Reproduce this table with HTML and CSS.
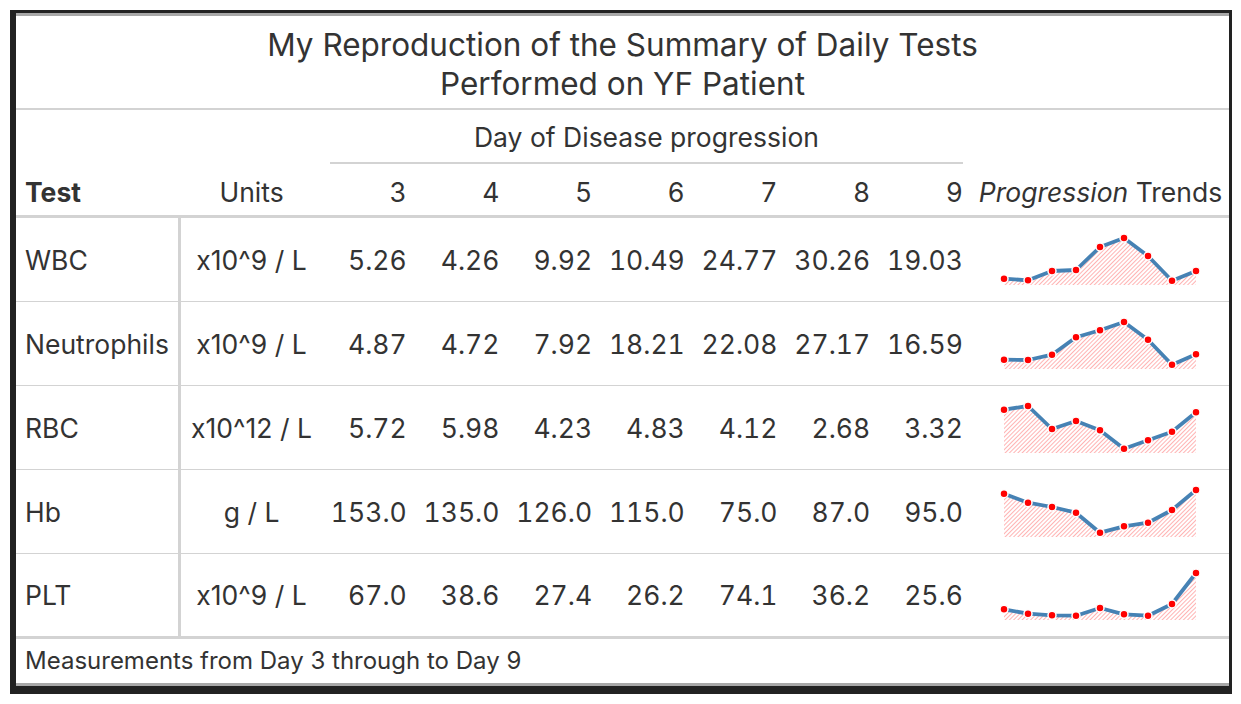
FILE: index.html
```html
<!DOCTYPE html>
<html>
<head>
<meta charset="utf-8">
<link rel="stylesheet" href="styles.css">
</head>
<body>
<svg class="defs" width="0" height="0">
  <defs>
    <pattern id="hatch" patternUnits="userSpaceOnUse" width="3" height="3" patternTransform="rotate(45)">
      <line x1="0" y1="0" x2="0" y2="3" stroke="#ff8a8a" stroke-width="1.3"/>
    </pattern>
  </defs>
</svg>
<div class="frame">
  <div class="gt">
    <div class="heading">
      <div class="title">My Reproduction of the Summary of Daily Tests</div>
      <div class="title">Performed on YF Patient</div>
    </div>
    <table class="tbl">
      <colgroup>
        <col class="c-test"><col class="c-units">
        <col class="c-day"><col class="c-day"><col class="c-day"><col class="c-day"><col class="c-day"><col class="c-day"><col class="c-day">
        <col class="c-trend">
      </colgroup>
      <thead>
        <tr class="spanrow">
          <th rowspan="2" class="lab lab-test">Test</th>
          <th rowspan="2" class="lab lab-center">Units</th>
          <th colspan="7" class="spanner"><div class="spanner-label">Day of Disease progression</div></th>
          <th rowspan="2" class="lab lab-center"><em>Progression</em> Trends</th>
        </tr>
        <tr class="daysrow">
          <th class="day">3</th><th class="day">4</th><th class="day">5</th><th class="day">6</th><th class="day">7</th><th class="day">8</th><th class="day">9</th>
        </tr>
      </thead>
      <tbody>
        <tr>
          <td class="stub">WBC</td><td class="unit">x10^9 / L</td>
          <td class="num">5.26</td><td class="num">4.26</td><td class="num">9.92</td><td class="num">10.49</td><td class="num">24.77</td><td class="num">30.26</td><td class="num">19.03</td>
          <td class="trend"><svg class="spark" width="200" height="60" viewBox="0 0 200 60">
            <path class="area" d="M4,55 L4,48.7 L28,50.3 L52,41 L76,40 L100,17 L124,8 L148,26 L172,50.7 L196,41 L196,55 Z"/>
            <polyline class="line" points="4,48.7 28,50.3 52,41 76,40 100,17 124,8 148,26 172,50.7 196,41"/>
            <g class="pts"><circle cx="4" cy="48.7" r="4"/><circle cx="28" cy="50.3" r="4"/><circle cx="52" cy="41" r="4"/><circle cx="76" cy="40" r="4"/><circle cx="100" cy="17" r="4"/><circle cx="124" cy="8" r="4"/><circle cx="148" cy="26" r="4"/><circle cx="172" cy="50.7" r="4"/><circle cx="196" cy="41" r="4"/></g>
          </svg></td>
        </tr>
        <tr>
          <td class="stub">Neutrophils</td><td class="unit">x10^9 / L</td>
          <td class="num">4.87</td><td class="num">4.72</td><td class="num">7.92</td><td class="num">18.21</td><td class="num">22.08</td><td class="num">27.17</td><td class="num">16.59</td>
          <td class="trend"><svg class="spark" width="200" height="60" viewBox="0 0 200 60">
            <path class="area" d="M4,55 L4,45.7 L28,46 L52,40.7 L76,23.3 L100,16.3 L124,8 L148,25.7 L172,50.7 L196,40.3 L196,55 Z"/>
            <polyline class="line" points="4,45.7 28,46 52,40.7 76,23.3 100,16.3 124,8 148,25.7 172,50.7 196,40.3"/>
            <g class="pts"><circle cx="4" cy="45.7" r="4"/><circle cx="28" cy="46" r="4"/><circle cx="52" cy="40.7" r="4"/><circle cx="76" cy="23.3" r="4"/><circle cx="100" cy="16.3" r="4"/><circle cx="124" cy="8" r="4"/><circle cx="148" cy="25.7" r="4"/><circle cx="172" cy="50.7" r="4"/><circle cx="196" cy="40.3" r="4"/></g>
          </svg></td>
        </tr>
        <tr>
          <td class="stub">RBC</td><td class="unit">x10^12 / L</td>
          <td class="num">5.72</td><td class="num">5.98</td><td class="num">4.23</td><td class="num">4.83</td><td class="num">4.12</td><td class="num">2.68</td><td class="num">3.32</td>
          <td class="trend"><svg class="spark" width="200" height="60" viewBox="0 0 200 60">
            <path class="area" d="M4,55 L4,11.7 L28,8 L52,31 L76,23 L100,32.3 L124,50.7 L148,42.3 L172,33.7 L196,14.3 L196,55 Z"/>
            <polyline class="line" points="4,11.7 28,8 52,31 76,23 100,32.3 124,50.7 148,42.3 172,33.7 196,14.3"/>
            <g class="pts"><circle cx="4" cy="11.7" r="4"/><circle cx="28" cy="8" r="4"/><circle cx="52" cy="31" r="4"/><circle cx="76" cy="23" r="4"/><circle cx="100" cy="32.3" r="4"/><circle cx="124" cy="50.7" r="4"/><circle cx="148" cy="42.3" r="4"/><circle cx="172" cy="33.7" r="4"/><circle cx="196" cy="14.3" r="4"/></g>
          </svg></td>
        </tr>
        <tr>
          <td class="stub">Hb</td><td class="unit">g / L</td>
          <td class="num">153.0</td><td class="num">135.0</td><td class="num">126.0</td><td class="num">115.0</td><td class="num">75.0</td><td class="num">87.0</td><td class="num">95.0</td>
          <td class="trend"><svg class="spark" width="200" height="60" viewBox="0 0 200 60">
            <path class="area" d="M4,55 L4,11.7 L28,20.7 L52,25 L76,30.7 L100,50.7 L124,44.3 L148,40.7 L172,28 L196,8 L196,55 Z"/>
            <polyline class="line" points="4,11.7 28,20.7 52,25 76,30.7 100,50.7 124,44.3 148,40.7 172,28 196,8"/>
            <g class="pts"><circle cx="4" cy="11.7" r="4"/><circle cx="28" cy="20.7" r="4"/><circle cx="52" cy="25" r="4"/><circle cx="76" cy="30.7" r="4"/><circle cx="100" cy="50.7" r="4"/><circle cx="124" cy="44.3" r="4"/><circle cx="148" cy="40.7" r="4"/><circle cx="172" cy="28" r="4"/><circle cx="196" cy="8" r="4"/></g>
          </svg></td>
        </tr>
        <tr class="last">
          <td class="stub">PLT</td><td class="unit">x10^9 / L</td>
          <td class="num">67.0</td><td class="num">38.6</td><td class="num">27.4</td><td class="num">26.2</td><td class="num">74.1</td><td class="num">36.2</td><td class="num">25.6</td>
          <td class="trend"><svg class="spark" width="200" height="60" viewBox="0 0 200 60">
            <path class="area" d="M4,55 L4,44.3 L28,48.7 L52,50.3 L76,50.7 L100,43 L124,49.3 L148,50.7 L172,39 L196,8 L196,55 Z"/>
            <polyline class="line" points="4,44.3 28,48.7 52,50.3 76,50.7 100,43 124,49.3 148,50.7 172,39 196,8"/>
            <g class="pts"><circle cx="4" cy="44.3" r="4"/><circle cx="28" cy="48.7" r="4"/><circle cx="52" cy="50.3" r="4"/><circle cx="76" cy="50.7" r="4"/><circle cx="100" cy="43" r="4"/><circle cx="124" cy="49.3" r="4"/><circle cx="148" cy="50.7" r="4"/><circle cx="172" cy="39" r="4"/><circle cx="196" cy="8" r="4"/></g>
          </svg></td>
        </tr>
      </tbody>
    </table>
    <div class="footnote">Measurements from Day 3 through to Day 9</div>
  </div>
</div>
</body>
</html>
```

FILE: styles.css
```css
html, body {
  margin: 0;
  padding: 0;
  background: #ffffff;
}

.defs {
  position: absolute;
  width: 0;
  height: 0;
}

.frame {
  margin: 10px 0 0 10px;
  width: 1222px;
  height: 684px;
  box-sizing: border-box;
  padding: 3px 3px 8px 6px;
  background: #222222;
}

.gt {
  background: #ffffff;
  border-top: 3px solid #a8a8a8;
  border-bottom: 3px solid #a8a8a8;
  color: #333333;
  font-family: Inter, "Open Sans", sans-serif;
}

.heading {
  box-sizing: border-box;
  height: 94px;
  padding-top: 9px;
  border-bottom: 2px solid #d3d3d3;
  text-align: center;
}

.title {
  font-size: 31.5px;
  line-height: 39px;
}

.tbl {
  width: 1213px;
  table-layout: fixed;
  border-collapse: separate;
  border-spacing: 0;
  font-size: 26.5px;
}

.c-test { width: 165px; }
.c-units { width: 141px; }
.c-day { width: 92.7px; }
.c-trend { width: 258px; }

.tbl th, .tbl td {
  box-sizing: border-box;
  padding: 0 8px;
  font-weight: normal;
  white-space: nowrap;
}

.lab {
  vertical-align: bottom;
  padding-bottom: 9px !important;
  line-height: 28px;
  border-bottom: 3px solid #d3d3d3;
}

.lab-test {
  text-align: left;
  font-weight: bold !important;
  padding-left: 9px !important;
}

.lab-center {
  text-align: center;
}

.spanrow {
  height: 54px;
}

.spanner {
  vertical-align: bottom;
  text-align: center;
}

.spanner-label {
  line-height: 28px;
  padding-bottom: 11px;
  border-bottom: 2px solid #d3d3d3;
}

.day {
  text-align: right;
  line-height: 28px;
  height: 54px;
  padding-top: 14px !important;
  padding-bottom: 9px !important;
  vertical-align: bottom;
  border-bottom: 3px solid #d3d3d3;
  font-variant-numeric: tabular-nums;
}

.tbl tbody td {
  height: 84px;
  border-bottom: 1px solid #d3d3d3;
  vertical-align: middle;
}

.tbl tbody tr.last td {
  height: 85px;
  border-bottom: 3px solid #d3d3d3;
}

.stub {
  text-align: left;
  padding-left: 9px !important;
  border-right: 3px solid #d3d3d3;
}

.unit {
  text-align: center;
}

.num {
  text-align: right;
  font-variant-numeric: tabular-nums;
}

.trend {
  padding: 0 !important;
  text-align: center;
}

.spark {
  display: block;
  margin: 0 auto;
  overflow: visible;
}

.spark .area {
  fill: url(#hatch);
}

.spark .line {
  fill: none;
  stroke: #4682b4;
  stroke-width: 3.8;
  stroke-linejoin: round;
  stroke-linecap: round;
}

.spark .pts circle {
  fill: #ff0000;
  stroke: #ffffff;
  stroke-width: 1.5;
}

.footnote {
  height: 44px;
  line-height: 44px;
  padding-left: 9px;
  font-size: 24px;
}
```
